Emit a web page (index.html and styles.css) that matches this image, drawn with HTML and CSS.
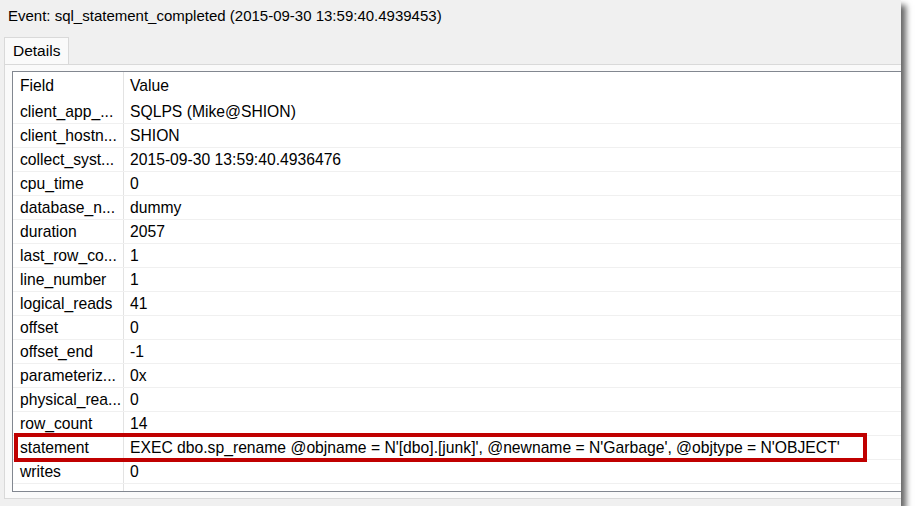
FILE: index.html
```html
<!DOCTYPE html>
<html>
  <head>
    <meta charset="UTF-8" />
    <title>Event details</title>
    <link rel="stylesheet" href="styles.css">
  </head>
  <body>
    <div class="window">
      <div class="event-title">Event: sql_statement_completed (2015-09-30 13:59:40.4939453)</div>

      <div class="tab-strip">
        <div class="tab active">Details</div>
      </div>

      <div class="tab-page">
        <div class="grid">
          <div class="grid-row header">
            <div class="cell field">Field</div>
            <div class="cell value">Value</div>
          </div>
          <div class="grid-row">
            <div class="cell field">client_app_...</div>
            <div class="cell value">SQLPS (Mike@SHION)</div>
          </div>
          <div class="grid-row">
            <div class="cell field">client_hostn...</div>
            <div class="cell value">SHION</div>
          </div>
          <div class="grid-row">
            <div class="cell field">collect_syst...</div>
            <div class="cell value">2015-09-30 13:59:40.4936476</div>
          </div>
          <div class="grid-row">
            <div class="cell field">cpu_time</div>
            <div class="cell value">0</div>
          </div>
          <div class="grid-row">
            <div class="cell field">database_n...</div>
            <div class="cell value">dummy</div>
          </div>
          <div class="grid-row">
            <div class="cell field">duration</div>
            <div class="cell value">2057</div>
          </div>
          <div class="grid-row">
            <div class="cell field">last_row_co...</div>
            <div class="cell value">1</div>
          </div>
          <div class="grid-row">
            <div class="cell field">line_number</div>
            <div class="cell value">1</div>
          </div>
          <div class="grid-row">
            <div class="cell field">logical_reads</div>
            <div class="cell value">41</div>
          </div>
          <div class="grid-row">
            <div class="cell field">offset</div>
            <div class="cell value">0</div>
          </div>
          <div class="grid-row">
            <div class="cell field">offset_end</div>
            <div class="cell value">-1</div>
          </div>
          <div class="grid-row">
            <div class="cell field">parameteriz...</div>
            <div class="cell value">0x</div>
          </div>
          <div class="grid-row">
            <div class="cell field">physical_rea...</div>
            <div class="cell value">0</div>
          </div>
          <div class="grid-row">
            <div class="cell field">row_count</div>
            <div class="cell value">14</div>
          </div>
          <div class="grid-row highlighted">
            <div class="cell field">statement</div>
            <div class="cell value">EXEC dbo.sp_rename @objname = N'[dbo].[junk]', @newname = N'Garbage', @objtype = N'OBJECT'</div>
          </div>
          <div class="grid-row">
            <div class="cell field">writes</div>
            <div class="cell value">0</div>
          </div>
          <div class="grid-row filler">
            <div class="cell field"></div>
            <div class="cell value"></div>
          </div>
        </div>
      </div>
    </div>
  </body>
</html>
```

FILE: styles.css
```css
body {
  margin: 0;
  background: #ffffff;
  font-family: 'Liberation Sans', Arial, sans-serif;
  font-size: 15px;
  color: #000;
}

.window {
  width: 901px;
  height: 506px;
  background: #f0f0f0;
  box-shadow: 5px 5px 6px rgba(0, 0, 0, 0.6);
  overflow: hidden;
}

.event-title {
  height: 37px;
  padding: 7px 0 0 8px;
  box-sizing: border-box;
  line-height: 18px;
  white-space: nowrap;
}

.tab-strip {
  display: flex;
  padding-left: 4px;
}

.tab {
  width: 65px;
  height: 27px;
  box-sizing: border-box;
  padding: 4px 0 0 8px;
  line-height: 18px;
  font-size: 15.5px;
  border: 1px solid #d9d9d9;
  border-bottom: none;
  background: #fafafa;
}

.tab-page {
  margin-left: 4px;
  width: 910px;
  height: 435px;
  box-sizing: border-box;
  border: 1px solid #d9d9d9;
  background: #fafafa;
  padding: 6px 0 6px 7px;
}

.grid {
  height: 100%;
  box-sizing: border-box;
  border: 1px solid #828790;
  border-right: none;
  background: #ffffff;
  display: flex;
  flex-direction: column;
  overflow: hidden;
  font-size: 15.7px;
}

.grid-row {
  display: flex;
  height: 24px;
  flex-shrink: 0;
  border-bottom: 1px solid #f0f0f0;
  box-sizing: border-box;
}

.grid-row.header {
  height: 28px;
  border-bottom: none;
}

.grid-row.filler {
  flex: 1;
  border-bottom: none;
}

.cell {
  line-height: 23px;
  white-space: nowrap;
}

.header .cell {
  line-height: 28px;
}

.cell.field {
  width: 111px;
  flex-shrink: 0;
  padding-left: 7px;
  box-sizing: border-box;
  border-right: 1px solid #e3e3e3;
  overflow: hidden;
}

.cell.value {
  padding-left: 6px;
}

.grid-row.highlighted {
  position: relative;
}

/* annotation box drawn over the statement row */
.grid-row.highlighted::after {
  content: '';
  position: absolute;
  left: 1px;
  top: -3px;
  width: 853px;
  height: 29px;
  box-sizing: border-box;
  border: 4px solid #c00000;
}
```
